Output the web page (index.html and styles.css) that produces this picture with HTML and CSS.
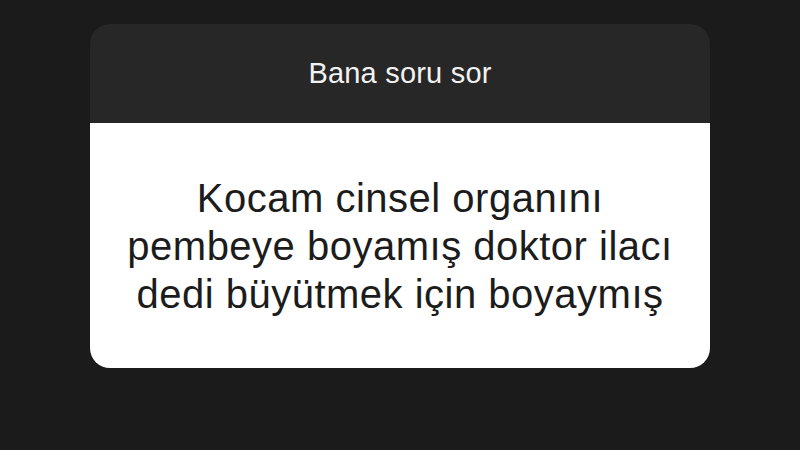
FILE: index.html
```html
<!DOCTYPE html>
<html lang="tr">
<head>
  <meta charset="UTF-8"/>
  <meta name="viewport" content="width=device-width, initial-scale=1.0"/>
  <title>Bana soru sor</title>
  <link rel="stylesheet" href="styles.css">
</head>
<body>

<div class="question-card">
  <div class="question-head">Bana soru sor</div>
  <div class="question-body">
    <p>Kocam cinsel organını<br>pembeye boyamış doktor ilacı<br>dedi büyütmek için boyaymış</p>
  </div>
</div>

</body>
</html>
```

FILE: styles.css
```css
*,*::before,*::after{box-sizing:border-box;margin:0;padding:0;}
body{font-family:"Liberation Sans",Arial,sans-serif;background:#1b1b1b;width:800px;height:450px;overflow:hidden;padding-top:24px;}
.question-card{width:620px;margin:0 auto;border-radius:20px;overflow:hidden;}
.question-head{height:99px;background:#272727;color:#f2f2f2;font-size:29px;display:flex;align-items:center;justify-content:center;letter-spacing:.2px;}
.question-body{height:245px;background:#fff;color:#1c1c1c;display:flex;align-items:center;justify-content:center;text-align:center;}
.question-body p{font-size:40px;line-height:48px;letter-spacing:.5px;}
```
